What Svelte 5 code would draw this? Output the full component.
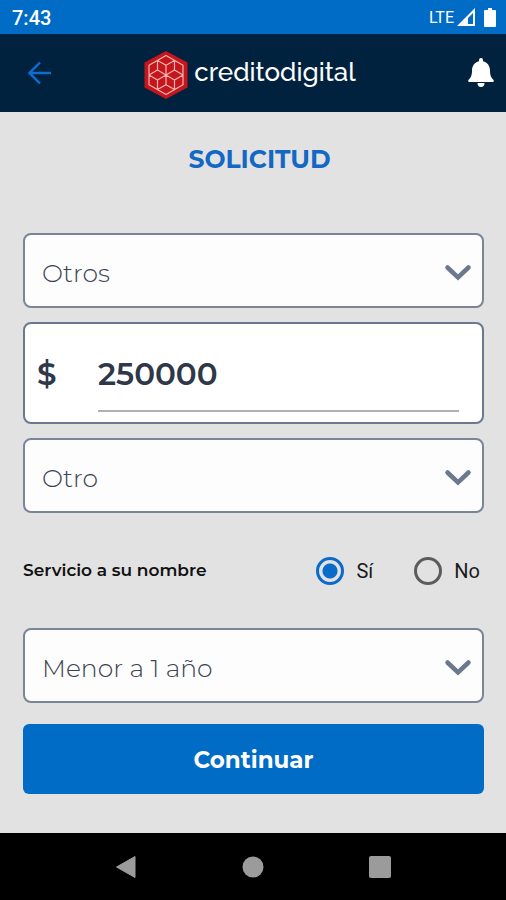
<script>
  let product = $state('Otros');
  let amount = $state('250000');
  let detail = $state('Otro');
  let owner = $state('si');
  let age = $state('Menor a 1 año');
</script>

{#snippet picker(label, value, options, onchange)}
  <div class="picker">
    <select aria-label={label} {value} onchange={(e) => onchange(e.currentTarget.value)}>
      {#each options as option}
        <option value={option}>{option}</option>
      {/each}
    </select>
    <svg class="chevron" width="28" height="18" viewBox="0 0 28 18" aria-hidden="true">
      <path d="M3.500 3.500L14 13.500L24.500 3.500" fill="none" stroke="#6b788e" stroke-width="4.500" stroke-linecap="round" stroke-linejoin="miter" />
    </svg>
  </div>
{/snippet}

<div class="app">
  <div class="status">
    <span class="time">7:43</span>
    <span class="indicators">
      <span class="network">LTE</span>
      <svg width="18" height="18" viewBox="0 0 18 18" aria-hidden="true">
        <path fill="#fff" fill-rule="evenodd" d="M18 0V18H0ZM16 5L11 10V16H16Z" />
      </svg>
      <svg class="battery" width="12" height="19" viewBox="0 0 12 19" aria-hidden="true">
        <path fill="#fff" d="M4 0h4v2h3a1 1 0 0 1 1 1v15a1 1 0 0 1-1 1H1a1 1 0 0 1-1-1V3a1 1 0 0 1 1-1h3z" />
      </svg>
    </span>
  </div>

  <header>
    <button class="icon" type="button" aria-label="Volver">
      <svg width="24" height="24" viewBox="0 0 24 24">
        <path d="M23 12H2M12 1.500L1.500 12L12 22.500" fill="none" stroke="#0b6fd0" stroke-width="2.400" />
      </svg>
    </button>
    <div class="brand">
      <svg width="44" height="48" viewBox="-22 -24 44 48" aria-hidden="true">
        <path d="M0-24L21.500-12.500V12.500L0 24L-21.500 12.500V-12.500Z" fill="#c4161c" />
        <path
          d="M0-19.500L17-9.750V9.750L0 19.500L-17 9.750V-9.750Z
             M-8.500-14.600L0-9.750L8.500-14.600M-8.500-14.600V-4.900M8.500-14.600V-4.900M0-9.750V9.750
             M-17 0L-8.500-4.900L8.500 4.900L17 0L8.500-4.900L-8.500 4.900Z
             M-8.500 4.900V14.600L0 9.750L8.500 14.600V4.900"
          fill="none" stroke="#f3b5ae" stroke-width="1.200" stroke-linejoin="round" />
      </svg>
      <span>creditodigital</span>
    </div>
    <button class="icon" type="button" aria-label="Notificaciones">
      <svg width="26" height="30" viewBox="0 0 26 30">
        <path fill="#fff" d="M13 0a2 2 0 0 1 2 2v1.200c4.500 1 7 4.800 7 9.300 0 5 1.200 7.200 3.400 9.200.8.900.3 2.300-.9 2.300H1.500C.3 24-.2 22.600.6 21.700 2.800 19.700 4 17.500 4 12.500c0-4.500 2.500-8.300 7-9.300V2a2 2 0 0 1 2-2zM9.500 25h7a3.500 4 0 0 1-7 0z" />
      </svg>
    </button>
  </header>

  <main>
    <h1>SOLICITUD</h1>
    <form onsubmit={(e) => e.preventDefault()}>
      {@render picker('Servicio', product, ['Otros', 'Préstamo'], (v) => (product = v))}

      <label class="amount">
        <span>$</span>
        <input type="text" inputmode="numeric" aria-label="Monto" bind:value={amount} />
      </label>

      {@render picker('Tipo', detail, ['Otro', 'Personal'], (v) => (detail = v))}

      <div class="owner">
        <span class="question" id="owner">Servicio a su nombre</span>
        <div class="choices" role="radiogroup" aria-labelledby="owner">
          <label><input type="radio" name="owner" value="si" bind:group={owner} />Sí</label>
          <label><input type="radio" name="owner" value="no" bind:group={owner} />No</label>
        </div>
      </div>

      {@render picker('Antigüedad', age, ['Menor a 1 año', 'Mayor a 1 año'], (v) => (age = v))}

      <button class="submit" type="submit">Continuar</button>
    </form>
  </main>

  <nav>
    <button type="button" aria-label="Atrás">
      <svg width="22" height="24" viewBox="0 0 22 24"><path d="M20 1.500V22.500L1.500 12Z" fill="#9b9b9b" stroke="#9b9b9b" stroke-linejoin="round" /></svg>
    </button>
    <button type="button" aria-label="Inicio">
      <svg width="22" height="24" viewBox="0 0 22 24"><circle cx="11" cy="12" r="10.500" fill="#9b9b9b" /></svg>
    </button>
    <button type="button" aria-label="Recientes">
      <svg width="22" height="24" viewBox="0 0 22 24"><rect y="1" width="22" height="22" rx="2" fill="#9b9b9b" /></svg>
    </button>
  </nav>
</div>

<style>
  :global(body) {
    margin: 0;
    background: #e2e2e2;
  }
  .app {
    display: flex;
    flex-direction: column;
    min-height: 100vh;
    background: #e2e2e2;
    font-family: Montserrat, Inter, sans-serif;
  }
  button,
  input,
  select {
    box-sizing: border-box;
    margin: 0;
    font-family: inherit;
  }
  button {
    padding: 0;
    border: 0;
    background: none;
    cursor: pointer;
  }
  svg {
    display: block;
  }
  .status {
    display: flex;
    justify-content: space-between;
    align-items: center;
    height: 34px;
    padding: 0 10px 0 12px;
    background: #006cc6;
    color: #fff;
    font-family: Roboto, sans-serif;
  }
  .time {
    padding-top: 2px;
    font-size: 20px;
    font-weight: 500;
  }
  .indicators {
    display: flex;
    align-items: center;
    gap: 3px;
  }
  .network {
    font-size: 16px;
  }
  .battery {
    margin-left: 6px;
  }
  header {
    display: grid;
    grid-template-columns: 40px 1fr 40px;
    align-items: center;
    box-sizing: border-box;
    height: 78px;
    padding: 0 12px 0 28px;
    background: #00223f;
  }
  .icon:last-child {
    justify-self: end;
  }
  .icon:first-child {
    justify-self: start;
  }
  .brand {
    display: flex;
    justify-content: center;
    align-items: center;
    gap: 6px;
    padding: 4px 22px 0 0;
    color: #fff;
    font-family: Raleway, Lato, sans-serif;
    font-size: 26px;
    font-weight: 500;
  }
  .brand span {
    padding-bottom: 6px;
  }
  main {
    flex: 1;
    padding: 32px 22px 39px 23px;
  }
  h1 {
    margin: 0 0 59px;
    padding-left: 12px;
    color: #1268c4;
    font-size: 25px;
    line-height: 30px;
    font-weight: 700;
    text-align: center;
  }
  form {
    display: flex;
    flex-direction: column;
  }
  .picker {
    display: grid;
    align-items: center;
  }
  .picker > * {
    grid-area: 1 / 1;
  }
  select {
    appearance: none;
    width: 100%;
    height: 75px;
    padding: 4px 56px 0 17px;
    border: 2px solid #7b8599;
    border-radius: 8px;
    background: #fdfdfe;
    color: #3c4350;
    font-size: 25px;
    font-weight: 300;
  }
  .chevron {
    justify-self: end;
    margin: 4px 12px 0 0;
    pointer-events: none;
  }
  .amount {
    display: flex;
    align-items: center;
    box-sizing: border-box;
    height: 102px;
    margin: 14px 0;
    padding: 0 23px 0 12px;
    border: 2px solid #6b788e;
    border-radius: 8px;
    background: #fff;
    color: #2e3848;
    font-size: 31px;
    font-weight: 600;
  }
  .amount span {
    flex: 0 0 61px;
    padding-top: 2px;
  }
  .amount input {
    flex: 1;
    min-width: 0;
    height: 74px;
    margin-top: 4px;
    padding: 0;
    border: 0;
    border-bottom: 2px solid #b0b0b0;
    background: none;
    color: inherit;
    font-size: 31px;
    font-weight: 600;
    outline: none;
  }
  .owner {
    display: flex;
    justify-content: space-between;
    align-items: center;
    height: 115px;
    padding-right: 4px;
  }
  .question {
    padding-bottom: 2px;
    color: #111;
    font-size: 17px;
    font-weight: 600;
  }
  .choices {
    display: flex;
    gap: 41px;
    font-family: Roboto, sans-serif;
    font-size: 20px;
    color: #1b1b1b;
  }
  .choices label {
    display: flex;
    align-items: center;
    gap: 12px;
  }
  input[type='radio'] {
    appearance: none;
    width: 28px;
    height: 28px;
    border: 3px solid #5c5c5c;
    border-radius: 50%;
  }
  input[type='radio']:checked {
    border-color: #0b6bc8;
    background: radial-gradient(circle, #0b6bc8 7px, transparent 8px);
  }
  .submit {
    height: 70px;
    margin-top: 21px;
    padding-top: 2px;
    border-radius: 6px;
    background: #006cc6;
    color: #fff;
    font-size: 23px;
    font-weight: 700;
  }
  nav {
    display: flex;
    justify-content: space-around;
    align-items: center;
    height: 67px;
    padding: 0 62px;
    background: #000;
  }
</style>
